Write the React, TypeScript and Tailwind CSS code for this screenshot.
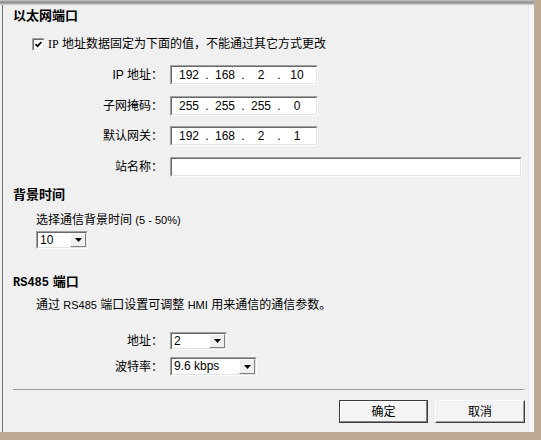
import { Fragment, type ReactNode } from "react";

function Sunken({ className, children }: { className: string; children?: ReactNode }) {
  return (
    <div className={`border border-t-[#a0a0a0] border-l-[#a0a0a0] border-b-white border-r-white ${className}`}>
      <div className="h-full border border-t-[#696969] border-l-[#696969] border-b-[#e3e3e3] border-r-[#e3e3e3] bg-white">
        {children}
      </div>
    </div>
  );
}

function IpField({ parts }: { parts: string[] }) {
  return (
    <Sunken className="w-[148px] h-[20px]">
      <div className="flex h-full items-center pl-[3px] text-[12px] leading-[16px]">
        {parts.map((p, i) => (
          <Fragment key={i}>
            {i > 0 && <span className="w-[8px] text-center">.</span>}
            <span className="w-[28px] text-center">{p}</span>
          </Fragment>
        ))}
      </div>
    </Sunken>
  );
}

function Combo({ value, className }: { value: string; className: string }) {
  return (
    <Sunken className={className}>
      <div className="flex h-full">
        <span className="flex-1 pl-[2px] text-[12px] leading-[14px]">{value}</span>
        <div className="w-[16px] h-full flex items-center justify-center bg-[#f0f0f0] border border-t-white border-l-white border-b-[#808080] border-r-[#808080]">
          <svg width="7" height="4" viewBox="0 0 7 4">
            <path d="M0 0h7L3.5 4z" fill="#000" />
          </svg>
        </div>
      </div>
    </Sunken>
  );
}

function Row({ label, children }: { label: string; children: ReactNode }) {
  return (
    <div className="flex items-center">
      <span className="w-[150px] text-right leading-[16px]">{label}</span>
      <div className="ml-[7px]">{children}</div>
    </div>
  );
}

function Btn({ label, primary }: { label: string; primary?: boolean }) {
  if (primary) {
    return (
      <div className="w-[89px] h-[23px] border border-[#3c3c3c]">
        <div className="h-full flex items-center justify-center bg-[#f4f4f4] border border-t-white border-l-white border-b-[#808080] border-r-[#808080]">
          {label}
        </div>
      </div>
    );
  }
  return (
    <div className="w-[90px] h-[23px] border border-t-white border-l-white border-b-[#404040] border-r-[#404040]">
      <div className="h-full flex items-center justify-center bg-[#f4f4f4] border border-t-[#f0f0f0] border-l-[#f0f0f0] border-b-[#a0a0a0] border-r-[#a0a0a0]">
        {label}
      </div>
    </div>
  );
}

export default function App() {
  return (
    <div className="w-[541px] h-[440px] bg-[#bfab95] overflow-hidden font-['Liberation_Sans','Noto_Sans_CJK_SC',sans-serif] text-[12px] text-black">
      <div className="w-[534px] h-[432px] bg-[#f0f0f0] flex flex-col">
        <div className="h-[5px] bg-linear-to-b from-[#c4c4c4] via-[#8e8e8e] to-[#d8d8d8]" />
        <div className="flex flex-1 min-h-0">
          <div className="w-[2px]" />
          <div className="w-[1px] bg-[#6e6e6e]" />

          <div className="flex-1 flex flex-col pl-[10px] pr-[3px]">
            {/* Ethernet */}
            <h2 className="mt-[3px] h-[16px] leading-[16px] font-bold text-[13px]">以太网端口</h2>
            <div className="mt-[12px] h-[16px] flex items-center ml-[19px]">
              <Sunken className="w-[13px] h-[13px]">
                <svg width="9" height="9" viewBox="0 0 9 9" className="block">
                  <path d="M1.5 4.2L3.5 6.2L7.5 2" stroke="#000" strokeWidth="1.7" fill="none" />
                </svg>
              </Sunken>
              <span className="ml-[3px] leading-[16px]">
                <span className="font-['Liberation_Serif']">IP</span> 地址数据固定为下面的值，不能通过其它方式更改
              </span>
            </div>

            <div className="mt-[13px]">
              <Row label="IP 地址：">
                <IpField parts={["192", "168", "2", "10"]} />
              </Row>
            </div>
            <div className="mt-[11px]">
              <Row label="子网掩码：">
                <IpField parts={["255", "255", "255", "0"]} />
              </Row>
            </div>
            <div className="mt-[10px]">
              <Row label="默认网关：">
                <IpField parts={["192", "168", "2", "1"]} />
              </Row>
            </div>
            <div className="mt-[11px]">
              <Row label="站名称：">
                <Sunken className="w-[352px] h-[20px]" />
              </Row>
            </div>

            {/* Background time */}
            <h2 className="mt-[10px] h-[16px] leading-[16px] font-bold text-[13px]">背景时间</h2>
            <p className="mt-[9px] h-[16px] leading-[16px] ml-[23px]">
              选择通信背景时间 <span className="text-[11px]">(5 - 50%)</span>
            </p>
            <div className="mt-[3px] ml-[23px]">
              <Combo value="10" className="w-[52px] h-[18px]" />
            </div>

            {/* RS485 */}
            <h2 className="mt-[25px] h-[16px] leading-[16px] font-bold text-[13px]">
              <span className="font-['Liberation_Mono'] text-[12px]">RS485</span> 端口
            </h2>
            <p className="mt-[7px] h-[16px] leading-[16px] ml-[23px]">
              通过 <span className="text-[11px]">RS485</span> 端口设置可调整 <span className="text-[11px]">HMI</span> 用来通信的通信参数。
            </p>
            <div className="mt-[19px]">
              <Row label="地址：">
                <Combo value="2" className="w-[57px] h-[18px]" />
              </Row>
            </div>
            <div className="mt-[7px]">
              <Row label="波特率：">
                <Combo value="9.6 kbps" className="w-[87px] h-[19px]" />
              </Row>
            </div>

            <div className="mt-[13px] h-px bg-[#a0a0a0] mr-[1px]" />

            <div className="mt-[10px] flex justify-end gap-[7px]">
              <Btn label="确定" primary />
              <Btn label="取消" />
            </div>
          </div>

          <div className="w-[6px] bg-[#f7f7fa] border-l border-[#e6e6ee]" />
        </div>
      </div>
    </div>
  );
}
